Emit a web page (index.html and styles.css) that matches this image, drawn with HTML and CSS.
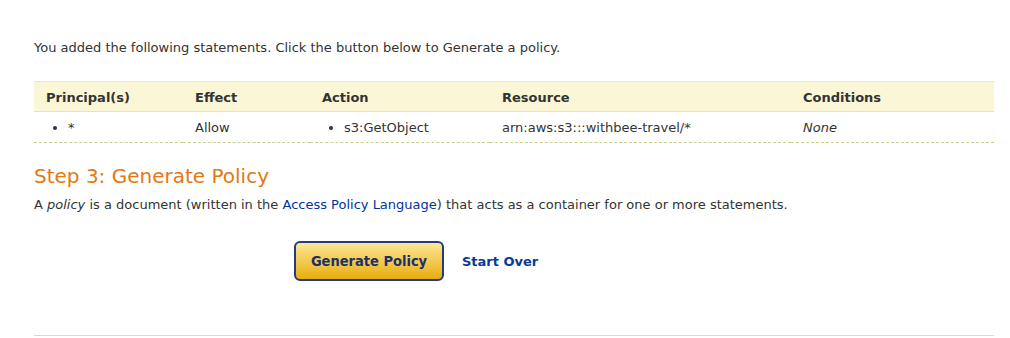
FILE: index.html
```html
<!DOCTYPE html>
<html lang="en">
<head>
    <meta charset="UTF-8">
    <title>AWS Policy Generator</title>
    <link rel="stylesheet" href="styles.css">
</head>
<body>
    <div class="container">
        <p class="intro">You added the following statements. Click the button below to Generate a policy.</p>

        <table class="statements">
            <thead>
                <tr>
                    <th class="col-principal">Principal(s)</th>
                    <th class="col-effect">Effect</th>
                    <th class="col-action">Action</th>
                    <th class="col-resource">Resource</th>
                    <th>Conditions</th>
                </tr>
            </thead>
            <tbody>
                <tr>
                    <td><ul><li>*</li></ul></td>
                    <td>Allow</td>
                    <td><ul><li>s3:GetObject</li></ul></td>
                    <td>arn:aws:s3:::withbee-travel/*</td>
                    <td><i>None</i></td>
                </tr>
            </tbody>
        </table>

        <h2 class="step-title">Step 3: Generate Policy</h2>
        <p class="step-desc">A <i>policy</i> is a document (written in the <a href="#">Access Policy Language</a>) that acts as a container for one or more statements.</p>

        <div class="actions">
            <button class="generate-btn">Generate Policy</button>
            <a href="#" class="start-over">Start Over</a>
        </div>

        <hr class="rule">
    </div>
</body>
</html>
```

FILE: styles.css
```css
body {
    margin: 0;
    font-family: Tahoma, "DejaVu Sans", Verdana, sans-serif;
    font-size: 13px;
    color: #333;
    background: white;
}
.container {
    padding: 40px 16px 0 34px;
}
.intro {
    margin: 0 0 26px;
}
.statements {
    width: 100%;
    border-collapse: collapse;
}
.statements th {
    text-align: left;
    background-color: #fbf6d6;
    border-top: 1px solid #efe8c4;
    border-bottom: 1px solid #e8e2c0;
    padding: 8px 12px 6px;
    font-weight: bold;
    color: #333;
}
.statements td {
    padding: 8px 12px 7px;
    border-bottom: 1px dashed #c9cf8c;
}
.statements ul {
    margin: 0;
    padding-left: 22px;
}
.col-principal { width: 125px; }
.col-effect { width: 103px; }
.col-action { width: 156px; }
.col-resource { width: 277px; }
.step-title {
    color: #e47911;
    font-weight: normal;
    font-size: 20px;
    margin: 21px 0 9px;
}
.step-desc {
    margin: 0;
}
.step-desc a {
    color: #0033a0;
    text-decoration: none;
}
.actions {
    display: flex;
    align-items: center;
    gap: 18px;
    margin: 29px 0 0 260px;
}
.generate-btn {
    font-family: "DejaVu Sans Condensed", "DejaVu Sans", sans-serif;
    font-size: 14.5px;
    font-weight: bold;
    white-space: nowrap;
    color: #1d2f6b;
    background: linear-gradient(#fee794, #e8ad10);
    border: 2px solid #213d7f;
    border-radius: 6px;
    width: 150px;
    height: 40px;
    padding: 0;
    cursor: pointer;
}
.start-over {
    color: #0a3a92;
    font-weight: bold;
    text-decoration: none;
}
.rule {
    border: none;
    border-top: 1px solid #d8d8d8;
    margin: 54px 0 0;
}
```
